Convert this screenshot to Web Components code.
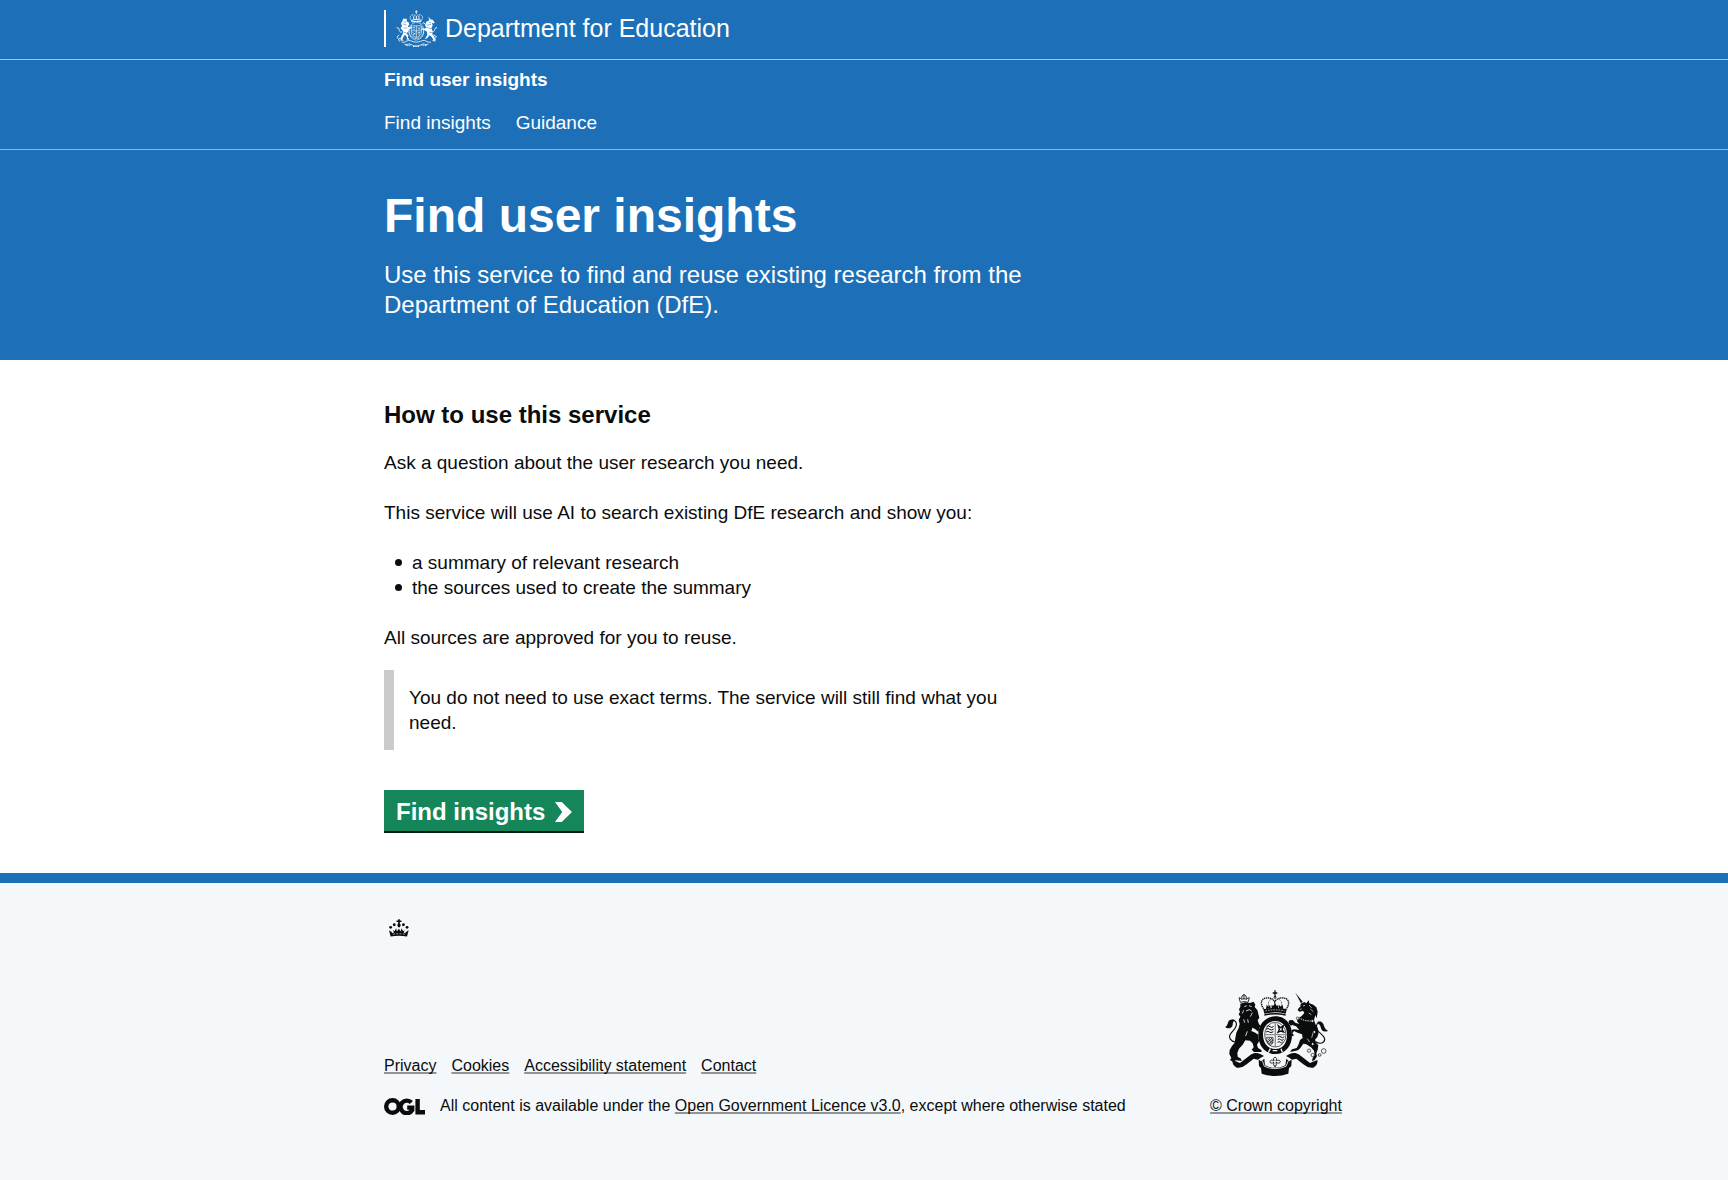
<!DOCTYPE html>
<html lang="en">
<head>
<meta charset="utf-8">
<title>Find user insights</title>
<style>
html{background:#f4f8fb}
body{margin:0;font-family:"Liberation Sans",Arial,sans-serif;font-size:19px;line-height:25px;color:#0b0c0c;
--blue:#1d70b8;--measure:960px}
</style>
</head>
<body>
<insights-page></insights-page>
<script>
const define=(name,html)=>{
  const t=document.createElement('template');
  t.innerHTML=html;
  customElements.define(name,class extends HTMLElement{
    constructor(){super();this.attachShadow({mode:'open'}).append(t.content.cloneNode(true));}
  });
};

define('page-width',`<style>:host{display:block;max-width:var(--measure);margin:0 auto;padding:0}@media(max-width:1020px){:host{margin:0 30px}}</style><slot></slot>`);

define('dfe-crest',`<style>:host{display:block;width:41px;height:37px}svg{display:block;width:100%;height:100%}</style>
<svg viewBox="48 17 123 110" aria-hidden="true" fill="none" stroke="#fff" stroke-width="2.4">
<path d="M109 17v12M105 22h8"/>
<path stroke-dasharray="3.5 1.5" d="M94 48c-8-10-2-18 7-17 4 0 7 3 8 6 1-3 4-6 8-6 9-1 15 7 7 17"/>
<path stroke-width="3" d="M95 47q14-4 28 0M96 52q13-3 26 0M95 47l1 6M123 47l-1 6M102 35q-3 5 0 10M116 35q3 5 0 10M109 36v9"/>
<path fill="#fff" stroke="none" d="M69 46l2-5 4 3 3-3 3 5-2 4 7 3 2 8-5 4 5 4 8-2-1 4-8 3-2 7-5 5 5 7-1 7 5 6-9-1 1-6-6-8-4 5-4 8 4 5-10-1 3-13 5-8-1-9-6-6 4-8-3-7z"/>
<path d="M66 83c-12 1-6-11-12-14M55 72l-6-4M67 100l-11 3 2 8M58 91l-7 6 3 5" />
<path fill="#fff" stroke="none" d="M148 47l-3-11 7 9 6 1 6 8-3 3-5-2 2 9-4 7 4 9-1 9 6 7 2 12-9 2 4-5-6-9-6-4-5 8-9 5 3-5 5-9-1-9-7-5-10-2 1-4 9 1 5-2-4-8 4-10z"/>
<path d="M156 82c10 0 7-9 12-13M166 71l5-2M158 101l8 3-2 8M160 91l9 5-3 6M136 60l-5-6-4 5"/>
<g stroke="#1d70b8" stroke-width="1.5"><path d="M70 52l8 2M68 58l12 4M71 70l11 1M69 82l11 4M146 53l8 2M139 62l14-2M140 68l13 5M147 83l10 1"/></g>
<ellipse cx="109" cy="78" rx="22" ry="24" stroke-dasharray="3 1.6" stroke-width="3"/>
<path stroke-width="2" d="M94 64h30v20c0 8-8 12-15 15-7-3-15-7-15-15zM109 64v34M94 79h30M98 69h7M98 74h7M113 69l8 6M114 75l7-6M97 84l9 5M113 84h8M113 89h7M99 92l8-7"/>
<path stroke-width="2" stroke-dasharray="5 1" d="M88 76c-4 16 6 28 21 31 15-3 25-15 21-31"/>
<path d="M65 113c10 2 13-4 20-5 8-1 13 5 24 5s16-6 24-5c7 1 10 7 20 5M73 119c8 4 14-4 21 1 5 3 8 4 15 4s10-1 15-4c7-5 13 3 21-1"/>
<path stroke-width="3" stroke-dasharray="3 2" d="M77 122c9 4 11-2 16 1M125 123c5-3 9 3 16-1M99 126h20"/>
</svg>`);

define('royal-arms',`<style>:host{display:block;width:104px;height:86px}svg{display:block;width:100%;height:100%}</style>
<svg viewBox="72 58 312 258" aria-hidden="true" fill="#0b0c0c">
<g fill="none" stroke="#0b0c0c" stroke-width="3">
<path stroke-width="4" d="M225 59v18M218 67h14"/><circle cx="225" cy="80" r="3"/>
<path stroke-width="4" stroke-dasharray="4 1.8" d="M195 119c-16-16-14-35 4-37 13-2 22 4 25 12 4-8 13-14 27-12 18 2 20 21 4 37"/>
<path stroke-dasharray="3 2" stroke-width="2" d="M210 116c-9-15-5-27 5-31M240 116c9-15 5-27-5-31M225 92v14"/>
</g>
<path d="M190 116q35-9 70 0l-3 13q-32-8-64 0z"/>
<path d="M200 102l5 6 5-5 2 10-14 2zM225 98l5 7 6-1-2 10h-18l-2-10 6 1zM248 102l-5 6-5-5-2 10 14 2z"/>
<path stroke="#f4f8fb" stroke-width="2" stroke-dasharray="5 3" fill="none" d="M196 121q29-7 58 0"/>
<path d="M193 131q32-8 64 0v4q-32-7-64 0z"/>

<path fill="none" stroke="#0b0c0c" stroke-width="3.5" d="M106 214C92 212 85 201 90 192C96 181 112 172 109 158C107 149 100 147 93 150"/>
<path d="M104 148C93 145 86 148 84 156C82 163 79 168 75 169C83 176 96 174 98 163C98 157 100 152 104 148z"/>
<path fill="none" stroke="#0b0c0c" stroke-width="2.5" d="M121 95l-4-14 8 3 1-8 6-4 6 4 2 8 8-3-4 14q-11-5-23 0zM132 70v16M124 86q8-4 17 0"/>
<path d="M121 99L135 95L150 97L161 93L166 102L164 109L172 118L175 130L178 141L173 149L177 161L187 170L192 184L200 191L192 198L183 192L175 183L165 175L157 171L154 181L166 186L176 193L181 203L176 214L171 222L174 232L184 238L185 244L162 244L155 237L161 230L158 218L150 210L136 209L128 222L117 234L112 246L113 258L123 264L125 271L108 269L98 273L90 268L94 262L88 250L89 238L96 226L104 216L106 202L109 186L116 172L119 160L116 148L121 138L116 131L120 124L117 116L121 108z"/>
<path fill="none" stroke="#f4f8fb" stroke-width="2.5" d="M133 108l7-3M147 105l8 3M138 121l10-4 7 4M157 126l-6 12M142 182l-5 14M127 128l4-9M131 146l3 10M143 146l2 10"/>

<path d="M286 66L308 93L303 98z"/>
<path d="M302 99L313 94L319 98L326 89L328 98L340 102L349 110L353 123L350 143L346 133L342 148L346 160L353 172L356 186L352 199L345 207L349 217L355 224L353 237L349 248L351 257L344 268L336 272L338 262L344 254L342 240L333 230L319 221L310 219L301 232L294 239L281 242L270 244L276 236L290 232L296 221L300 208L308 202L306 191L293 186L282 181L277 188L282 194L277 197L269 188L272 179L283 176L298 178L288 167L279 164L274 157L278 163L272 165L265 156L268 149L278 148L286 156L298 160L291 152L294 143L305 136L313 127L309 120L299 123L293 119L296 112L301 108z"/>
<g fill="none" stroke="#f4f8fb" stroke-width="3"><path stroke-dasharray="4 3" d="M296 141q20 13 46 9"/><path stroke-width="2" d="M309 106l6-2M300 116l5-1M327 103l8 9M331 115l9 8M326 127l8 5M341 181l-6 20M322 204l7 10"/></g>
<g fill="none" stroke="#0b0c0c"><path stroke-width="3.5" d="M347 213C360 222 374 217 374 206C374 193 354 187 350 174C347 162 353 153 363 155"/>
<g stroke-width="2" fill="#f4f8fb"><circle cx="293" cy="143" r="4"/><circle cx="337" cy="151" r="4"/><circle cx="343" cy="184" r="4"/><circle cx="338" cy="220" r="4"/><circle cx="327" cy="240" r="5"/><circle cx="338" cy="253" r="5"/><circle cx="359" cy="253" r="4"/><circle cx="371" cy="241" r="7"/></g></g>
<path d="M353 153C364 151 371 157 372 166C374 173 379 178 384 180C375 186 365 182 363 173C361 164 358 160 353 158z"/>

<path fill="#f4f8fb" d="M226 137c30 0 50 23 50 55 0 35-21 58-50 58s-51-23-51-58c0-32 21-55 51-55z"/>
<path fill-rule="evenodd" d="M226 137c30 0 50 23 50 55 0 35-21 58-50 58s-51-23-51-58c0-32 21-55 51-55zm0 14c-22 0-37 17-37 41s14 43 37 43 35-18 35-43-14-41-35-41z"/>
<g fill="none" stroke="#0b0c0c" stroke-width="2">
<ellipse cx="226" cy="192" rx="32" ry="37"/>
<path stroke="#8c9092" stroke-width="4" d="M226 155v74M194 192h64"/>
<path stroke-width="3" d="M200 168q5-5 10 0t11-1M199 176q5-5 10 0t12-1M198 184q6-4 10 0t12-1M233 199q5-5 10 0t10-1M233 207q5-5 9 0t9-1M233 215q5-4 8 0t7-1"/>
<path stroke-width="4" d="M235 165l7 6 8-5-4 10 5 8-9-3-8 4 4-9z"/>
<path d="M200 200h19v12c0 7-6 10-9 13-6-6-10-11-10-19zM203 203l14 17M207 202l12 15M201 209l11 12M212 200l7 9M216 203l-14 12M219 208l-12 13"/>
</g>
<path fill="none" stroke="#f4f8fb" stroke-width="4" d="M211 234l-6 12M243 234l4 11M218 240l14 0"/>

<path d="M98 268L120 277L152 252C166 242 181 248 192 256L182 261L174 267L161 264L140 281Q125 294 110 291Q95 283 98 268zM352 268L330 277L298 252C284 242 269 248 258 256L268 261L276 267L289 264L310 281Q325 294 340 291Q355 283 352 268z"/>
<path d="M176 267l8 5 9-8 2 20q30 15 61 0l3-20 8 8 8-5-1 19-7 7-2 16q-39 14-80 0l-2-16-6-7z"/>
<path fill="none" stroke="#f4f8fb" stroke-width="2.5" d="M187 270l6 17q32 14 65 0l7-17"/>
<g fill="none" stroke="#0b0c0c" stroke-width="2.5"><path d="M225 259q-8 4-3 12-10-6-12 2 1 8 12 2-4 9 3 13 7-4 3-13 11 6 13-2-2-8-13-2 5-8-3-12zM225 284v6"/></g>
</svg>`);

define('crown-mark',`<style>:host{display:block;width:20px;height:18px}svg{display:block;width:100%;height:100%}</style>
<svg viewBox="57 57 61 54" aria-hidden="true" fill="#0b0c0c">
<path d="M85 57h5v4h5v5h-5v4l3 5-3 7h-5l-3-7 3-5v-4h-5v-5h5z"/>
<circle cx="73" cy="74" r="4.3"/><circle cx="101" cy="74" r="4.3"/><circle cx="62" cy="82" r="4.3"/><circle cx="112" cy="82" r="4.3"/>
<path d="M57 91L65 96L68 100L72 98L69 90L74 94L79 85L81 95L87 86L93 95L95 85L100 94L105 90L102 98L106 100L109 96L117 91L112 110Q87 106 62 110z"/>
<path fill="none" stroke="#f4f8fb" stroke-width="2" stroke-dasharray="6 4" d="M69 103q18-3 36 0"/>
</svg>`);

define('ogl-logo',`<style>:host{display:block;width:41px;height:17px;flex:none}svg{display:block;width:100%;height:100%}</style>
<svg viewBox="0 0 41 17" role="img" aria-label="OGL" fill="none" stroke="#0b0c0c" stroke-width="4.4">
<circle cx="8.5" cy="8.5" r="6.3"/><path d="M27.4 4.6a6.3 6.3 0 1 0 .8 7.6V9.6h-5"/><path d="M33.6 1v13.3H41"/></svg>`);

define('site-header',`<style>
:host{display:block;background:var(--blue);color:#fff}
a{color:inherit;text-decoration:none}
.org{border-bottom:1px solid #a5c6e3}
.logo{display:flex;width:max-content;height:37px;padding:10px 0 12px;box-sizing:content-box}
.logo dfe-crest{margin:0 8px 0 10px}
.bar{width:2px;background:#fff}
.logo span{font-size:25px;line-height:36px}
.service{padding:7px 0 14px;border-bottom:1px solid #8eb7dc}
.name{display:block;font-weight:bold}
nav{display:flex;gap:25px;margin-top:18px}
</style>
<header>
<div class="org"><page-width><a class="logo" href="#"><div class="bar"></div><dfe-crest></dfe-crest><span>Department for Education</span></a></page-width></div>
<div class="service"><page-width><a class="name" href="#">Find user insights</a><nav><a href="#">Find insights</a><a href="#">Guidance</a></nav></page-width></div>
</header>`);

define('page-hero',`<style>
:host{display:block;background:var(--blue);color:#fff;padding:40px 0}
.text{max-width:660px}
::slotted(h1){font-size:48px;line-height:52px;margin:0 0 18px}
::slotted(p){font-size:24px;line-height:30px;margin:0}
</style><page-width><div class="text"><slot></slot></div></page-width>`);

define('inset-text',`<style>:host{display:block;border-left:10px solid #cbcbcb;padding:15px;margin:20px 0 40px}</style><slot></slot>`);

define('start-link',`<style>
:host{display:block}
a{display:flex;width:max-content;align-items:center;gap:10px;padding:10px 12px 7px;background:#14865a;color:#fff;font-weight:bold;font-size:24px;line-height:24px;text-decoration:none;box-shadow:0 2px #0a1a14}
svg{width:17px;height:20px}
</style><a href="#"><slot></slot><svg viewBox="0 0 33 40" preserveAspectRatio="none" aria-hidden="true"><path fill="#fff" d="M0 0h13l20 20-20 20H0l14-20z"/></svg></a>`);

define('site-footer',`<style>
:host{display:block;background:#f4f8fb;border-top:10px solid var(--blue);font-size:16px;line-height:20px;padding:36px 0 64px}
a{color:inherit;text-decoration:underline;text-decoration-thickness:2px;text-decoration-color:#929596;text-underline-offset:1px;text-decoration-skip-ink:none}
crown-mark{margin-left:5px}
.row{display:flex;justify-content:space-between;align-items:flex-end;margin-top:53px}
.links{display:flex;gap:15px}
.licence{display:flex;gap:15px;margin-top:20px;align-items:center}
.crown{display:flex;flex-direction:column;align-items:center;gap:20px;min-width:136px}
</style>
<footer><page-width><crown-mark></crown-mark>
<div class="row"><div><div class="links"><a href="#">Privacy</a><a href="#">Cookies</a><a href="#">Accessibility statement</a><a href="#">Contact</a></div>
<div class="licence"><ogl-logo></ogl-logo><span>All content is available under the <a href="#">Open Government Licence v3.0</a>, except where otherwise stated</span></div></div>
<div class="crown"><royal-arms></royal-arms><a href="#">© Crown copyright</a></div></div>
</page-width></footer>`);

define('insights-page',`<style>
:host{display:block}
main{background:#fff}
.body{padding:40px 0 42px}
.col{max-width:640px}
h2{font-size:24px;line-height:30px;margin:0 0 20px}
.col p{margin:0 0 25px}
ul{margin:0 0 25px;padding:0;list-style:none}
li{display:flex;align-items:center;gap:10px;padding-left:11px}
li::before{content:"";width:7px;height:7px;border-radius:4px;background:#0b0c0c}
.col p.last{margin-bottom:0}
</style>
<site-header></site-header>
<main>
<page-hero><h1>Find user insights</h1><p>Use this service to find and reuse existing research from the Department of Education (DfE).</p></page-hero>
<div class="body"><page-width><div class="col">
<h2>How to use this service</h2>
<p>Ask a question about the user research you need.</p>
<p>This service will use AI to search existing DfE research and show you:</p>
<ul><li>a summary of relevant research</li><li>the sources used to create the summary</li></ul>
<p class="last">All sources are approved for you to reuse.</p>
<inset-text>You do not need to use exact terms. The service will still find what you need.</inset-text>
<start-link>Find insights</start-link>
</div></page-width></div>
</main>
<site-footer></site-footer>`);
</script>
</body>
</html>
